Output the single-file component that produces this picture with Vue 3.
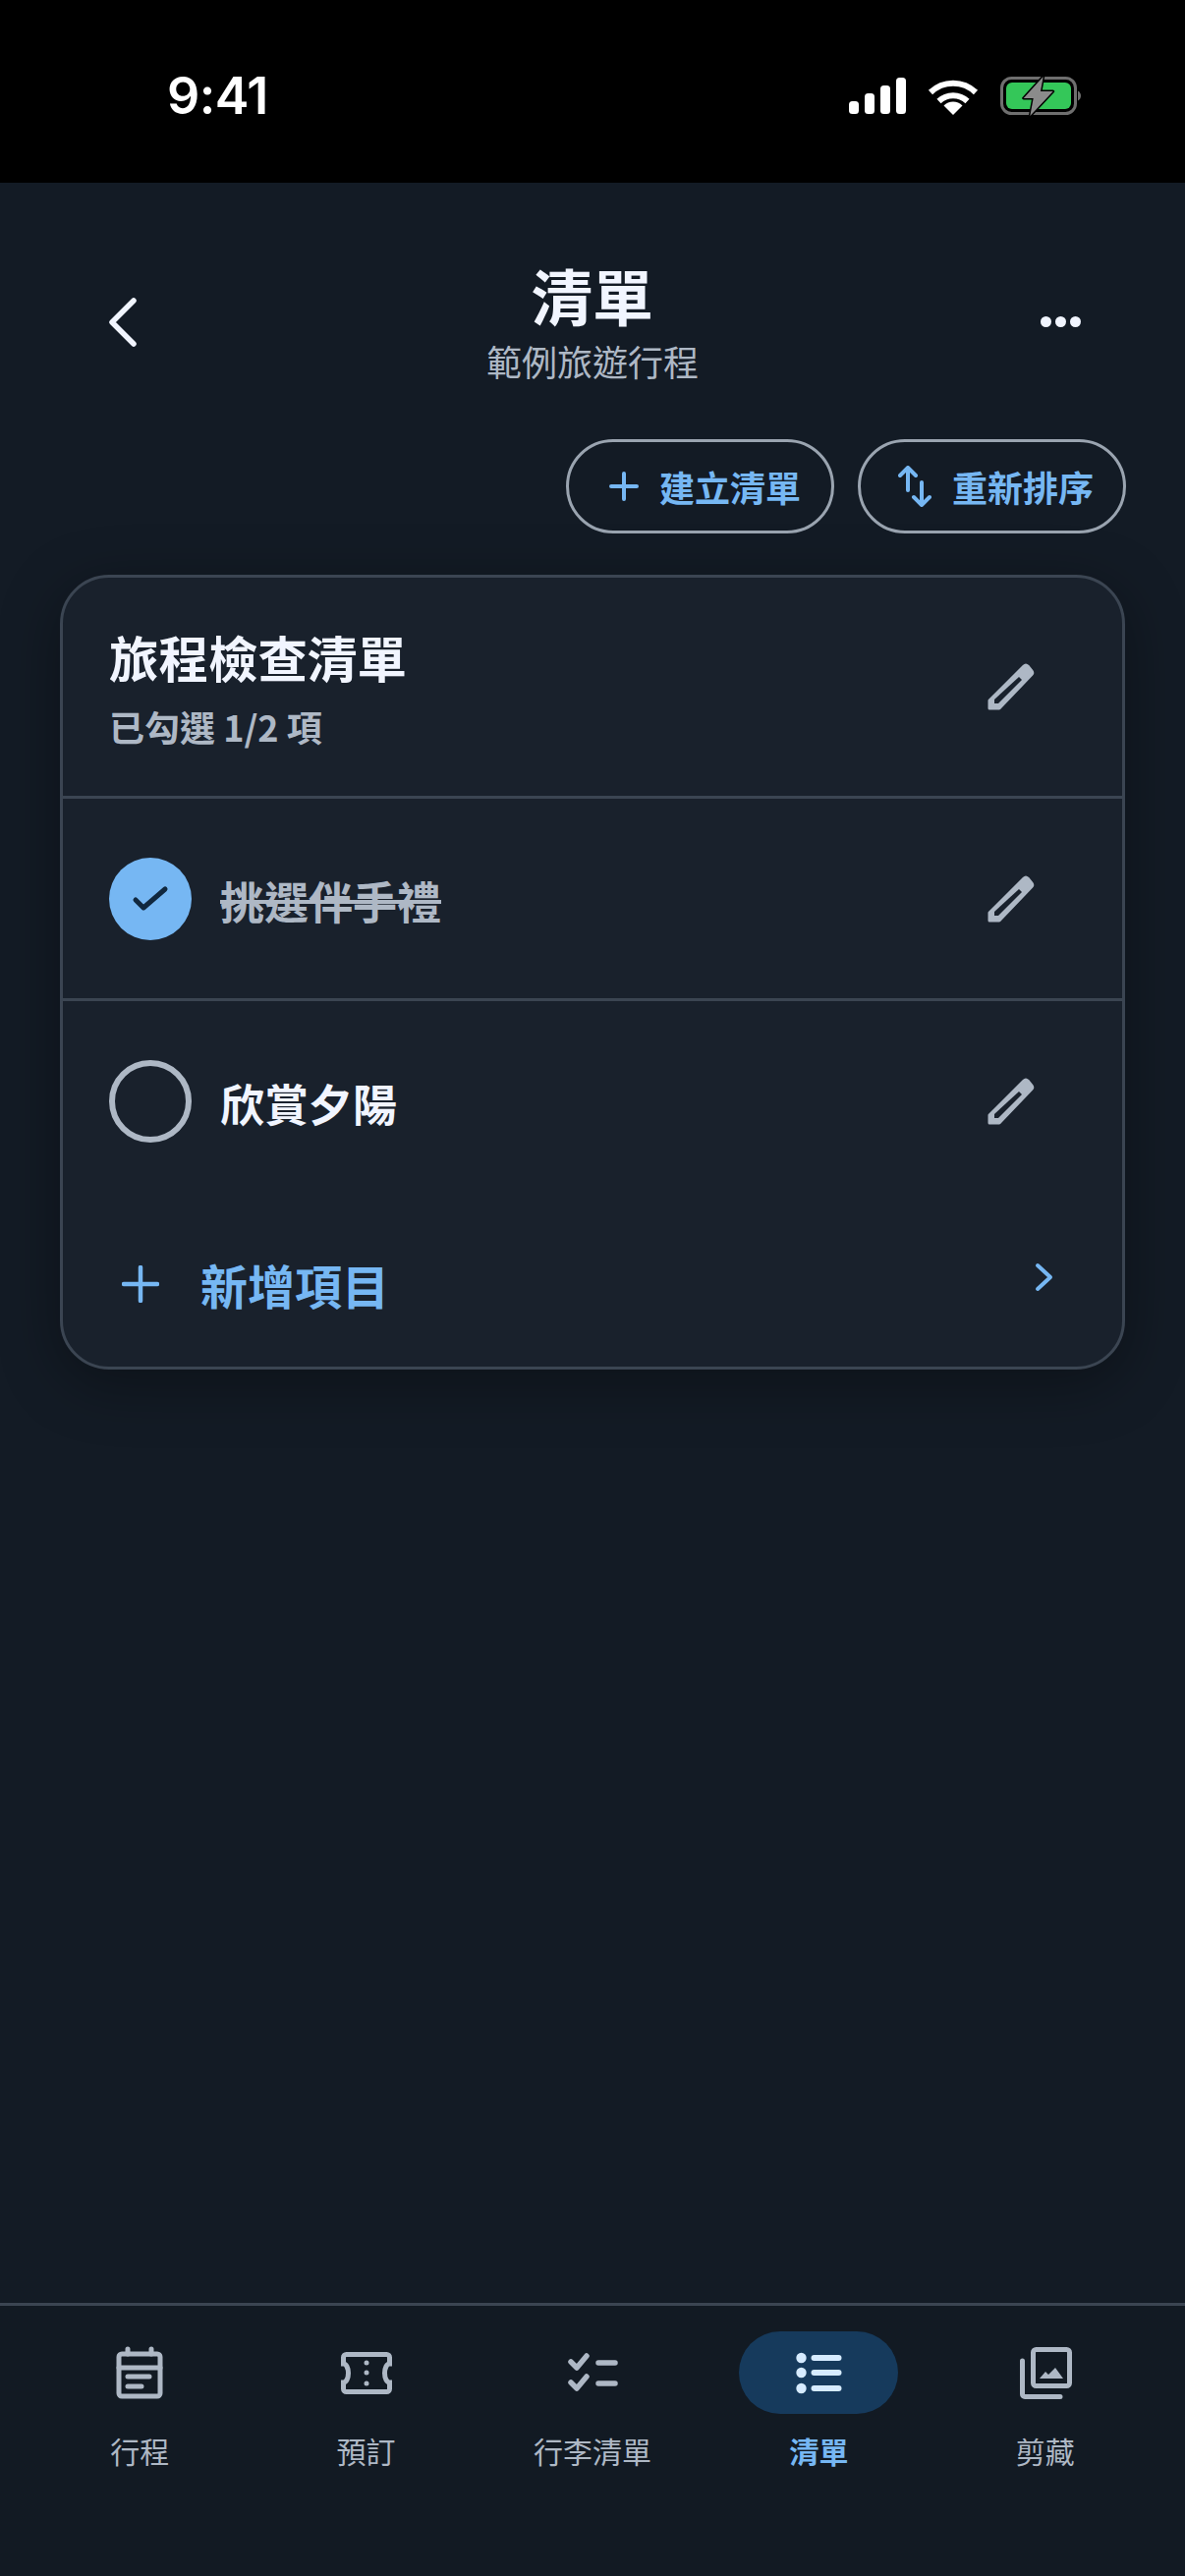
<script setup>
const rows = [
  { id: 1, label: '挑選伴手禮', done: true },
  { id: 2, label: '欣賞夕陽', done: false },
]

const tabs = [
  { key: 'itinerary', label: '行程' },
  { key: 'booking', label: '預訂' },
  { key: 'packing', label: '行李清單' },
  { key: 'list', label: '清單', active: true },
  { key: 'clips', label: '剪藏' },
]
</script>

<template>
  <div class="screen">
    <div class="status">
      <span class="time">9:41</span>
      <div class="status-icons">
        <svg width="58" height="37" viewBox="0 0 58 37" fill="#fff">
          <rect x="0" y="24" width="10" height="13" rx="3.5" />
          <rect x="16" y="16" width="10" height="21" rx="3.5" />
          <rect x="32" y="8" width="10" height="29" rx="3.5" />
          <rect x="48" y="0" width="10" height="37" rx="3.5" />
        </svg>
        <svg width="52" height="38" viewBox="0 0 52 38" fill="none" stroke="#fff" stroke-width="6">
          <path d="M3 15A33 33 0 0 1 49 15" />
          <path d="M11.5 24A21 21 0 0 1 40.5 24" />
          <path d="M26 38L16.5 28.500A13.500 13.500 0 0 1 35.500 28.500Z" fill="#fff" stroke="none" />
        </svg>
        <svg width="82" height="42" viewBox="0 0 82 42" fill="none">
          <rect x="1.500" y="2.500" width="75" height="36" rx="10" stroke="#6f6f6f" stroke-width="3" />
          <rect x="6" y="7" width="66" height="27" rx="6" fill="#34c759" />
          <path d="M79 15.500C81 16.500 82 18.500 82 20.500C82 22.500 81 24.500 79 25.500Z" fill="#6f6f6f" />
          <path d="M43.700 1L23.700 23H33.700L30.300 41L53.700 16H41Z" fill="#8b8b8b" stroke="#000" stroke-width="3" stroke-linejoin="round" paint-order="stroke" />
        </svg>
      </div>
    </div>

    <header class="header">
      <button class="icon-btn back">
        <svg width="30" height="50" viewBox="0 0 30 50" fill="none" stroke="#f1f5ff" stroke-width="5.500" stroke-linecap="round" stroke-linejoin="round">
          <path d="M26 3L4 25L26 47" />
        </svg>
      </button>
      <div class="heading">
        <h1 class="title">清單</h1>
        <p class="subtitle">範例旅遊行程</p>
      </div>
      <button class="icon-btn more">
        <span class="dot"></span><span class="dot"></span><span class="dot"></span>
      </button>
    </header>

    <div class="actions">
      <button class="pill-btn pill-create">
        <svg width="30" height="30" viewBox="0 0 30 30" fill="none" stroke="#76b7f3" stroke-width="4" stroke-linecap="round">
          <path d="M15 2V28M2 15H28" />
        </svg>
        建立清單
      </button>
      <button class="pill-btn pill-sort">
        <svg width="34" height="42" viewBox="0 0 34 42" fill="none" stroke="#76b7f3" stroke-width="4" stroke-linecap="round" stroke-linejoin="round">
          <path d="M10 2V25M2 10L10 2L18 10" />
          <path d="M24 17V40M16 32L24 40L32 32" />
        </svg>
        重新排序
      </button>
    </div>

    <section class="card">
      <div class="card-head">
        <div>
          <h2 class="card-title">旅程檢查清單</h2>
          <p class="card-sub">已勾選 1/2 項</p>
        </div>
        <svg class="pencil" width="48" height="48" viewBox="0 0 48 48">
          <path d="M2 38L37 3Q39 1 41 3L45 8Q46.500 10 45 11.500L12 46H2Z" fill="#aeb8c5" stroke="#aeb8c5" stroke-width="3" stroke-linejoin="round" />
          <path d="M32 14L35 17L11 41H7V37Z" fill="#19212c" />
        </svg>
      </div>

      <div v-for="row in rows" :key="row.id" class="row">
        <span class="check" :class="{ done: row.done }">
          <svg v-if="row.done" width="84" height="84" viewBox="0 0 84 84" fill="none" stroke="#10283f" stroke-width="5" stroke-linecap="round" stroke-linejoin="round">
            <path d="M27 43L35 51L57 32" />
          </svg>
        </span>
        <span class="row-label" :class="{ done: row.done }">{{ row.label }}</span>
        <svg class="pencil" width="48" height="48" viewBox="0 0 48 48">
          <path d="M2 38L37 3Q39 1 41 3L45 8Q46.500 10 45 11.500L12 46H2Z" fill="#aeb8c5" stroke="#aeb8c5" stroke-width="3" stroke-linejoin="round" />
          <path d="M32 14L35 17L11 41H7V37Z" fill="#19212c" />
        </svg>
      </div>

      <div class="add-row">
        <svg width="38" height="38" viewBox="0 0 38 38" fill="none" stroke="#76b7f3" stroke-width="4.500" stroke-linecap="round">
          <path d="M19 2V36M2 19H36" />
        </svg>
        <span class="add-label">新增項目</span>
        <svg class="chevron" width="20" height="30" viewBox="0 0 20 30" fill="none" stroke="#76b7f3" stroke-width="4" stroke-linecap="round" stroke-linejoin="round">
          <path d="M4 3L17 15L4 27" />
        </svg>
      </div>
    </section>

    <nav class="tabbar">
      <div v-for="tab in tabs" :key="tab.key" class="tab" :class="{ active: tab.active }">
        <span class="tab-icon">
          <svg v-if="tab.key === 'itinerary'" width="64" height="64" viewBox="0 0 64 64" fill="none" stroke="#aeb8c5" stroke-width="5" stroke-linecap="round">
            <rect x="11" y="13" width="42" height="43" rx="3" />
            <path d="M11 27H53" />
            <path d="M20 8V13M44 8V13" />
            <path d="M20 36H42M20 46H34" />
          </svg>
          <svg v-else-if="tab.key === 'booking'" width="64" height="64" viewBox="0 0 64 64" fill="none" stroke="#aeb8c5" stroke-width="5">
            <path d="M11.500 13.500H52.500A3 3 0 0 1 55.500 16.500V23A5 9.500 0 0 0 55.500 42V48.500A3 3 0 0 1 52.500 51.500H11.500A3 3 0 0 1 8.500 48.500V42A5 9.500 0 0 0 8.500 23V16.500A3 3 0 0 1 11.500 13.500Z" />
            <circle cx="32" cy="22" r="2.500" fill="#aeb8c5" stroke="none" />
            <circle cx="32" cy="32" r="2.500" fill="#aeb8c5" stroke="none" />
            <circle cx="32" cy="43" r="2.500" fill="#aeb8c5" stroke="none" />
          </svg>
          <svg v-else-if="tab.key === 'packing'" width="64" height="64" viewBox="0 0 64 64" fill="none" stroke="#aeb8c5" stroke-width="5.500" stroke-linecap="round" stroke-linejoin="round">
            <path d="M10 21L16 27L26 15M10 42L16 48L26 36" />
            <path d="M38 22H55M38 43H55" />
          </svg>
          <svg v-else-if="tab.key === 'list'" width="64" height="64" viewBox="0 0 64 64" fill="#d6ebff">
            <circle cx="14.500" cy="17" r="5.200" />
            <circle cx="14.500" cy="32" r="5.200" />
            <circle cx="14.500" cy="48" r="5.200" />
            <rect x="24.500" y="14" width="31" height="6" rx="3" />
            <rect x="24.500" y="29" width="31" height="6" rx="3" />
            <rect x="24.500" y="45" width="31" height="6" rx="3" />
          </svg>
          <svg v-else width="64" height="64" viewBox="0 0 64 64" fill="none" stroke="#aeb8c5" stroke-width="5" stroke-linecap="round">
            <path d="M8.500 20V54A2.500 2.500 0 0 0 11 56.500H47" />
            <rect x="19.500" y="8.500" width="37" height="37" rx="3" />
            <path d="M26 38L32 31L35 34L42 27L50 38Z" fill="#aeb8c5" stroke="none" />
          </svg>
        </span>
        <span class="tab-label">{{ tab.label }}</span>
      </div>
    </nav>
  </div>
</template>

<style scoped>
.screen {
  width: 1206px;
  height: 2622px;
  display: flex;
  flex-direction: column;
  background: #131b25;
  font-family: "Noto Sans CJK TC", "Noto Sans", sans-serif;
  overflow: hidden;
}

.status {
  height: 186px;
  flex: none;
  box-sizing: border-box;
  padding: 9px 106px 0 170px;
  background: #000;
  display: flex;
  align-items: center;
  justify-content: space-between;
}

.time {
  font-family: Inter, sans-serif;
  font-size: 52px;
  font-weight: 600;
  color: #fff;
  letter-spacing: -0.5px;
}

.status-icons {
  display: flex;
  align-items: center;
  gap: 22px;
}

.header {
  display: flex;
  align-items: center;
  justify-content: space-between;
  padding: 78px 106px 0 110px;
}

.icon-btn {
  padding: 0;
  border: none;
  background: transparent;
  display: flex;
  align-items: center;
  width: 40px;
}

.back svg {
  display: block;
}

.more {
  width: 44px;
  gap: 4px;
  justify-content: flex-end;
}

.dot {
  width: 11px;
  height: 11px;
  flex: none;
  border-radius: 50%;
  background: #f1f5ff;
}

.heading {
  text-align: center;
}

.title {
  margin: 0;
  font-size: 62px;
  line-height: 72px;
  font-weight: 700;
  color: #f1f5ff;
}

.subtitle {
  margin: 7px 0 0;
  font-size: 36px;
  line-height: 48px;
  font-weight: 400;
  color: #aeb8c5;
}

.actions {
  display: flex;
  justify-content: flex-end;
  gap: 24px;
  margin-top: 56px;
  padding-right: 60px;
}

.pill-btn {
  height: 96px;
  box-sizing: border-box;
  border: 3px solid #9aa4b0;
  border-radius: 48px;
  background: transparent;
  display: flex;
  align-items: center;
  font-family: inherit;
  font-size: 36px;
  font-weight: 700;
  color: #76b7f3;
}

.pill-create {
  width: 273px;
  padding: 0 0 0 41px;
  gap: 21px;
}

.pill-sort {
  width: 273px;
  padding: 0 0 0 38px;
  gap: 21px;
}

.card {
  margin: 42px 61px 0;
  box-sizing: border-box;
  border: 3px solid #3b4552;
  border-radius: 50px;
  background: #19212c;
  box-shadow: 0 14px 60px rgba(0, 0, 0, 0.35);
}

.card-head {
  height: 222px;
  box-sizing: border-box;
  padding: 0 89px 0 47px;
  display: flex;
  align-items: center;
  justify-content: space-between;
}

.card-title {
  margin: 0;
  font-size: 50.5px;
  line-height: 66px;
  font-weight: 700;
  color: #f1f5ff;
}

.card-sub {
  margin: 14px 0 0;
  font-size: 36px;
  line-height: 48px;
  font-weight: 700;
  color: #aeb8c5;
}

.row {
  height: 206px;
  box-sizing: border-box;
  border-top: 3px solid #3b4552;
  padding: 0 89px 0 47px;
  display: flex;
  align-items: center;
}

.check {
  width: 84px;
  height: 84px;
  flex: none;
  box-sizing: border-box;
  border: 6px solid #aeb8c5;
  border-radius: 50%;
}

.check.done {
  border: none;
  background: #76b7f3;
}

.check svg {
  display: block;
}

.row-label {
  margin: 3px 0 0 29px;
  flex: 1;
  font-size: 45px;
  font-weight: 700;
  color: #f1f5ff;
}

.row-label.done {
  color: #aeb8c5;
  text-decoration: line-through;
}

.pencil {
  flex: none;
}

.add-row {
  height: 169px;
  box-sizing: border-box;
  padding: 0 70px 0 60px;
  display: flex;
  align-items: center;
}

.add-label {
  margin-left: 42px;
  flex: 1;
  font-size: 48px;
  font-weight: 700;
  color: #76b7f3;
}

.chevron {
  margin-bottom: 13px;
}

.tabbar {
  margin-top: auto;
  height: 278px;
  flex: none;
  box-sizing: border-box;
  border-top: 3px solid #3b4552;
  padding: 26px 27px 0;
  background: #121a23;
  display: grid;
  grid-template-columns: repeat(5, 1fr);
  align-items: start;
}

.tab {
  display: flex;
  flex-direction: column;
  align-items: center;
}

.tab-icon {
  width: 162px;
  height: 84px;
  border-radius: 42px;
  display: flex;
  align-items: center;
  justify-content: center;
}

.tab.active .tab-icon {
  background: #163a5c;
}

.tab-label {
  margin-top: 15px;
  font-size: 30px;
  line-height: 44px;
  color: #aeb8c5;
}

.tab.active .tab-label {
  font-weight: 700;
  color: #76b7f3;
}
</style>
